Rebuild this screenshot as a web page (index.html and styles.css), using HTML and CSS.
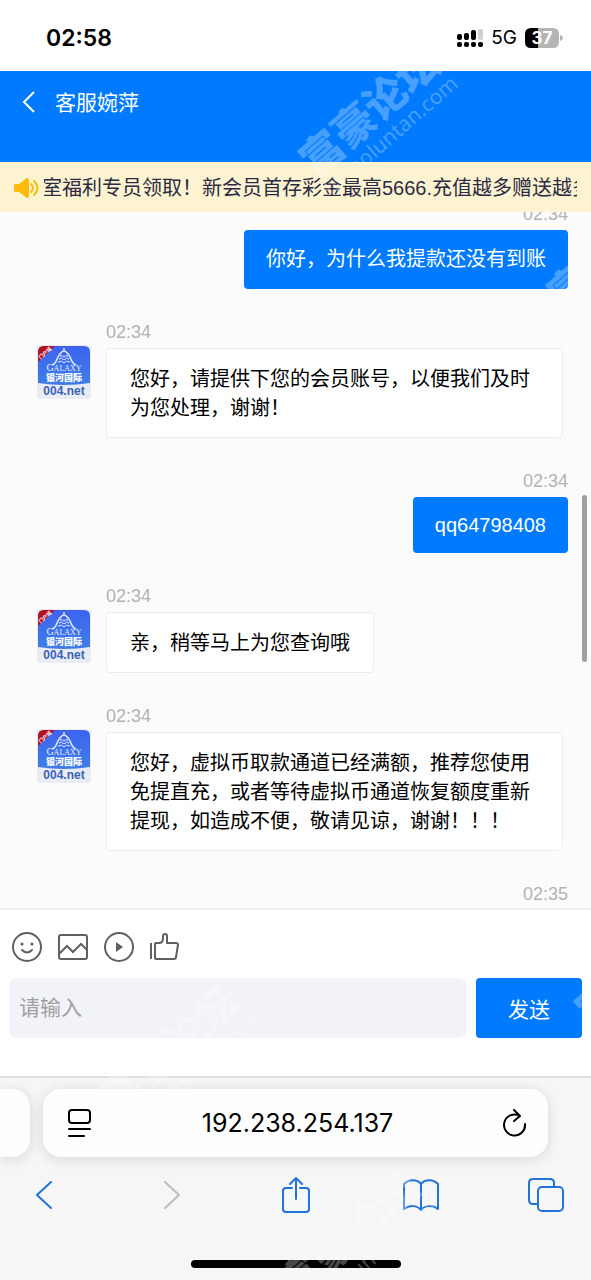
FILE: index.html
```html
<!DOCTYPE html>
<html lang="zh-CN">
<head>
    <meta charset="UTF-8">
    <meta name="viewport" content="width=device-width, initial-scale=1.0">
    <title>客服婉萍</title>
    <link rel="stylesheet" href="styles.css">
</head>
<body>
<!--头像和图标-->
<svg class="defs" aria-hidden="true">
    <defs>
        <linearGradient id="sky" x1="0" y1="0" x2="0" y2="1">
            <stop offset="0" stop-color="#3d63f0"/>
            <stop offset="1" stop-color="#3f86e2"/>
        </linearGradient>
        <clipPath id="card"><path d="M1 38V7q0-6 6-6h40q6 0 6 6v31q-26 4-52 0z"/></clipPath>
    </defs>
    <symbol id="avatar" viewBox="0 0 54 54">
        <rect width="54" height="54" fill="#ebebf5"/>
        <g clip-path="url(#card)">
            <rect width="54" height="54" fill="url(#sky)"/>
            <path d="M0 0h19L0 18z" fill="#b3131f"/>
        </g>
        <text x="8" y="10" transform="rotate(-43 8 8)" text-anchor="middle" class="a-tag">门户域</text>
        <g fill="none" stroke="#dfe8ff" stroke-width="1.500">
            <path d="M27 3v3M15 20c6-1 5-13 12-14 7 1 6 13 12 14"/>
            <path d="M21 17q4-2 6 1 2-3 6-1M22 14q3-2 5 1 2-3 5-1M23 11q2-1 4 1 2-2 4-1" stroke-width="1"/>
        </g>
        <text x="27" y="26" text-anchor="middle" class="a-name">G<tspan class="a-small">ALAXY</tspan></text>
        <text x="27" y="36" text-anchor="middle" class="a-cn">银河国际</text>
        <text x="27" y="50" text-anchor="middle" class="a-site">004.net</text>
    </symbol>
</svg>

<div class="page">
    <!--状态栏-->
    <div class="status">
        <span class="clock">02:58</span>
        <div class="signal">
            <svg width="26" height="18" viewBox="0 0 26 18">
                <g fill="#000">
                    <rect x="0" y="5" width="5" height="6" rx="2"/>
                    <rect x="7" y="4" width="5" height="7" rx="2"/>
                    <rect x="14" y="1" width="5" height="10" rx="2"/>
                    <rect x="0" y="13" width="5" height="5" rx="2"/>
                    <rect x="7" y="13" width="5" height="5" rx="2"/>
                    <rect x="14" y="13" width="5" height="5" rx="2"/>
                    <rect x="21" y="13" width="5" height="5" rx="2"/>
                </g>
                <rect x="21" y="0" width="5" height="11" rx="2" fill="#d0d0d0"/>
            </svg>
            <span class="net">5G</span>
            <svg width="38" height="20" viewBox="0 0 38 20">
                <path d="M6 0h7v20H6q-6 0-6-6V6q0-6 6-6z" fill="#000"/>
                <path d="M13 0h15q6 0 6 6v8q0 6-6 6H13zM35 7q3 1 3 3t-3 3z" fill="#b5b5b5"/>
                <text x="17" y="16" text-anchor="middle" class="battery">37</text>
            </svg>
        </div>
    </div>

    <!--头部-->
    <header class="head">
        <a href="#" class="back" aria-label="返回">
            <svg width="14" height="22" viewBox="0 0 14 22"><path d="M12 1L2 11l10 10" fill="none" stroke="#fff" stroke-width="2"/></svg>
        </a>
        <h1>客服婉萍</h1>
    </header>

    <!--公告-->
    <div class="notice">
        <svg width="25" height="20" viewBox="0 0 25 20">
            <path d="M1 6h4l8-6q2 0 2 2v16q0 2-2 2l-8-6H1q-1 0-1-2V8q0-2 1-2z" fill="#fdbc0b"/>
            <path d="M17 6q4 4 0 8M20 3q7 7 0 14" fill="none" stroke="#fdbc0b" stroke-width="2" stroke-linecap="round"/>
        </svg>
        <p>室福利专员领取！新会员首存彩金最高5666.充值越多赠送越多</p>
    </div>

    <!--聊天内容-->
    <main class="chat">
        <ul class="list">
            <li class="msg mine">
                <span class="time">02:34</span>
                <p class="bubble">你好，为什么我提款还没有到账</p>
            </li>
            <li class="msg">
                <svg class="avatar"><use href="#avatar"/></svg>
                <span class="time">02:34</span>
                <p class="bubble">您好，请提供下您的会员账号，以便我们及时为您处理，谢谢！</p>
            </li>
            <li class="msg mine">
                <span class="time">02:34</span>
                <p class="bubble account">qq64798408</p>
            </li>
            <li class="msg">
                <svg class="avatar"><use href="#avatar"/></svg>
                <span class="time">02:34</span>
                <p class="bubble">亲，稍等马上为您查询哦</p>
            </li>
            <li class="msg">
                <svg class="avatar"><use href="#avatar"/></svg>
                <span class="time">02:34</span>
                <p class="bubble">您好，虚拟币取款通道已经满额，推荐您使用免提直充，或者等待虚拟币通道恢复额度重新提现，如造成不便，敬请见谅，谢谢！！！</p>
            </li>
            <li class="msg mine">
                <span class="time">02:35</span>
            </li>
        </ul>
        <span class="thumb"></span>
    </main>

    <!--输入区-->
    <form class="composer">
        <div class="tools">
            <button type="button" aria-label="表情">
                <svg width="30" height="30" viewBox="0 0 30 30">
                    <circle cx="15" cy="15" r="14"/>
                    <path d="M10 18q5 5 10 0" stroke-linecap="round"/>
                    <g class="solid"><circle cx="10" cy="12" r="1.6"/><circle cx="20" cy="12" r="1.6"/></g>
                </svg>
            </button>
            <button type="button" aria-label="图片">
                <svg width="30" height="30" viewBox="0 0 30 30">
                    <rect x="1" y="3" width="28" height="24" rx="2"/>
                    <path d="M1 22l8-8 6 6 8-8 6 6"/>
                </svg>
            </button>
            <button type="button" aria-label="视频">
                <svg width="30" height="30" viewBox="0 0 30 30">
                    <circle cx="15" cy="15" r="14"/>
                    <path class="solid" d="M12 10v10l7-5z"/>
                </svg>
            </button>
            <button type="button" aria-label="点赞">
                <svg width="30" height="30" viewBox="0 0 30 30">
                    <path d="M1 11v16M5 12q0-1 1-1h3q4 0 4-5V4q0-2 2-2t2 2v7h9q2 0 2 2l-2 12q0 2-2 2H6q-1 0-1-1z" stroke-linejoin="round"/>
                </svg>
            </button>
        </div>
        <div class="send-row">
            <input type="text" placeholder="请输入" aria-label="请输入">
            <button type="submit" class="send">发送</button>
        </div>
    </form>

    <!--浏览器底栏-->
    <footer class="browser">
        <div class="tabs">
            <span class="prev-tab"></span>
            <div class="address">
                <svg width="24" height="28" viewBox="0 0 24 28" fill="none" stroke="#000" stroke-width="2" stroke-linecap="round">
                    <rect x="1" y="1" width="21" height="13" rx="3"/>
                    <path d="M1 20h21M1 27h15"/>
                </svg>
                <span>192.238.254.137</span>
                <button type="button" aria-label="刷新">
                    <svg width="24" height="28" viewBox="0 0 24 28" fill="none" stroke="#000" stroke-width="2" stroke-linecap="round" stroke-linejoin="round">
                        <path d="M22 15A10.500 10.500 0 1 1 17 7M11 1l6 6-6 5"/>
                    </svg>
                </button>
            </div>
        </div>
        <nav class="toolbar">
            <button type="button" aria-label="后退"><svg viewBox="0 0 36 36"><path d="M24 5L10 18l14 13"/></svg></button>
            <button type="button" aria-label="前进" class="off"><svg viewBox="0 0 36 36"><path d="M13 5l14 13-14 13"/></svg></button>
            <button type="button" aria-label="分享"><svg viewBox="0 0 36 36"><path d="M14 11H8q-3 0-3 3v18q0 3 3 3h20q3 0 3-3V14q0-3-3-3h-6M18 22V1M12 7l6-6 6 6"/></svg></button>
            <button type="button" aria-label="书签"><svg viewBox="0 0 36 36"><path d="M18 7C14 2 6 2 1 7v25c5-4 13-4 17 1 4-5 12-5 17-1V7C30 2 22 2 18 7zv26"/><path d="M18 7v26"/></svg></button>
            <button type="button" aria-label="标签页"><svg viewBox="0 0 36 36"><rect x="10" y="10" width="25" height="24" rx="4"/><path d="M10 27H5q-4 0-4-4V6q0-4 4-4h17q4 0 4 4v4"/></svg></button>
        </nav>
        <div class="home"></div>
    </footer>

    <!--水印-->
    <div class="marks" aria-hidden="true">
        <div class="mark m1"><b>富豪论坛</b><span>fuhaoluntan.com</span></div>
        <div class="mark m2"><b>富豪论坛</b><span>fuhaoluntan.com</span></div>
        <div class="mark m3"><b>富豪论坛</b><span>fuhaoluntan.com</span></div>
        <div class="mark m4"><b>富豪论坛</b><span>fuhaoluntan.com</span></div>
        <div class="mark m5"><b>富豪论坛</b><span>fuhaoluntan.com</span></div>
    </div>
</div>
</body>
</html>
```
FILE: styles.css
```css
*{
    margin: 0;
    padding: 0;
    list-style: none;
    box-sizing: border-box;
}

body{
    font-family: "Liberation Sans", "Noto Sans CJK SC", sans-serif;
    font-size: 20px;
    color: #000;
    background-color: #fff;
}

button{
    border: none;
    background: none;
    font-family: inherit;
}

svg{
    display: block;
    flex-shrink: 0;
}

.defs{
    position: absolute;
    width: 0;
    height: 0;
}

.page{
    position: relative;
    min-height: 100vh;
    overflow: hidden;
    display: flex;
    flex-direction: column;
}

/*状态栏*/
.status{
    height: 71px;
    padding: 4px 28px 0 46px;
    display: flex;
    justify-content: space-between;
    align-items: center;
    font-family: Inter, "Liberation Sans", sans-serif;
}

.clock{
    font-size: 23px;
    font-weight: 600;
}

.signal{
    display: flex;
    align-items: center;
    gap: 8px;
}

.net{
    font-size: 19px;
}

.battery{
    font: bold 17px Inter, sans-serif;
    fill: #fff;
}

/*头部*/
.head{
    height: 91px;
    padding: 17px 22px;
    display: flex;
    align-items: flex-start;
    gap: 19px;
    background-color: #007aff;
    color: #fff;
}

.back{
    padding-top: 3px;
}

.head h1{
    font-size: 21px;
    line-height: 30px;
    font-weight: 400;
}

/*公告*/
.notice{
    height: 50px;
    padding: 2px 14px 0;
    display: flex;
    align-items: center;
    gap: 5px;
    background-color: #fdf3d0;
    color: #2b2b45;
}

.notice p{
    flex: 1;
    overflow: hidden;
    white-space: nowrap;
    line-height: 30px;
    /*滚动中的文字*/
    text-indent: -2px;
}

/*聊天*/
.chat{
    position: relative;
    flex: 1 0 0;
    min-height: 0;
    overflow: hidden;
    padding: 0 23px 4px 37px;
    background-color: #fbfbfc;
    display: flex;
    flex-direction: column;
    justify-content: flex-end;
}

.list{
    height: 0;
    flex: 1;
    display: flex;
    flex-direction: column;
    justify-content: flex-end;
    gap: 33px;
}

.msg{
    flex-shrink: 0;
    display: grid;
    grid-template-columns: 54px 1fr;
    column-gap: 15px;
    row-gap: 6px;
    padding-right: 5px;
    justify-items: start;
}

.time{
    grid-column: 2;
    font-size: 18px;
    line-height: 20px;
    color: #b3b3b3;
}

.avatar{
    grid-column: 1;
    grid-row: 1 / 3;
    width: 54px;
    height: 54px;
    margin-top: 23px;
}

.bubble{
    grid-column: 2;
    padding: 16px 23px 14px;
    border: 1px solid #ededee;
    border-radius: 4px;
    background-color: #fff;
    line-height: 29px;
}

.mine{
    display: flex;
    flex-direction: column;
    align-items: flex-end;
    gap: 6px;
    padding-right: 0;
}

.mine .bubble{
    padding: 15px 22px;
    border: none;
    background-color: #007aff;
    color: #fff;
}

.mine .account{
    line-height: 26px;
}

.thumb{
    position: absolute;
    right: 4px;
    top: 283px;
    width: 5px;
    height: 167px;
    border-radius: 3px;
    background-color: #a0a0a0;
}

.a-tag{
    font: bold 5px "Noto Sans CJK SC", sans-serif;
    fill: #fff;
}

.a-name{
    font: 10px "Liberation Serif", serif;
    fill: #e6edff;
}

.a-small{
    font-size: 8px;
}

.a-cn{
    font: 900 9px "Noto Sans CJK SC", sans-serif;
    fill: #fff;
}

.a-site{
    font: bold 12px "Liberation Sans", sans-serif;
    fill: #3a63b8;
}

/*输入区*/
.composer{
    border-top: 2px solid #ececec;
    padding: 22px 9px 38px;
    background-color: #fff;
}

.tools{
    display: flex;
    gap: 16px;
    padding: 0 3px;
}

.tools svg{
    fill: none;
    stroke: #606060;
    stroke-width: 2;
}

.tools .solid{
    fill: #606060;
    stroke: none;
}

.send-row{
    display: flex;
    gap: 9px;
    margin-top: 16px;
}

.send-row input{
    flex: 1;
    min-width: 0;
    height: 60px;
    padding: 0 10px;
    border: none;
    border-radius: 8px;
    background-color: #f2f3f8;
    font-family: inherit;
    font-size: 21px;
}

.send-row input::placeholder{
    color: #a0a0a0;
    font-weight: 400;
}

.send{
    width: 106px;
    height: 60px;
    border-radius: 4px;
    background-color: #007aff;
    color: #fff;
    font-size: 21px;
}

/*浏览器底栏*/
.browser{
    border-top: 2px solid #dedede;
    padding-top: 11px;
    background-color: #f6f6f6;
}

.tabs{
    display: flex;
    gap: 13px;
    padding-right: 43px;
}

.prev-tab{
    width: 30px;
    border-radius: 0 18px 18px 0;
    background-color: #fdfdfd;
    box-shadow: 0 2px 14px rgba(0, 0, 0, .13);
}

.address{
    flex: 1;
    height: 68px;
    padding: 0 21px 0 25px;
    display: flex;
    justify-content: space-between;
    align-items: center;
    border-radius: 18px;
    background-color: #fdfdfd;
    box-shadow: 0 2px 14px rgba(0, 0, 0, .13);
    font-family: Inter, "Liberation Sans", sans-serif;
    font-size: 25px;
}

.toolbar{
    display: flex;
    justify-content: space-between;
    padding: 20px 27px 0;
}

.toolbar svg{
    width: 36px;
    height: 36px;
    fill: none;
    stroke: #2173d8;
    stroke-width: 2;
    stroke-linecap: round;
    stroke-linejoin: round;
}

.toolbar .off svg{
    stroke: #bcbcbc;
}

.home{
    width: 210px;
    height: 8px;
    margin: 47px auto 12px;
    border-radius: 4px;
    background-color: #000;
}

/*水印*/
.marks{
    position: absolute;
    inset: 0;
    overflow: hidden;
    pointer-events: none;
}

.mark{
    position: absolute;
    width: 180px;
    transform: translate(-50%, -50%) rotate(-41deg);
    text-align: center;
    white-space: nowrap;
    color: rgba(255, 255, 255, .28);
}

.mark b{
    display: block;
    font-size: 42px;
    line-height: 40px;
    font-weight: 900;
}

.mark span{
    display: block;
    font-family: "Noto Sans", sans-serif;
    font-size: 21px;
    line-height: 20px;
}

.m1{
    left: 377px;
    top: 120px;
}

.m2{
    left: 625px;
    top: 254px;
}

.m3{
    left: 178px;
    top: 1058px;
}

.m4{
    left: 653px;
    top: 970px;
}

.m5{
    left: 356px;
    top: 1244px;
}
```
